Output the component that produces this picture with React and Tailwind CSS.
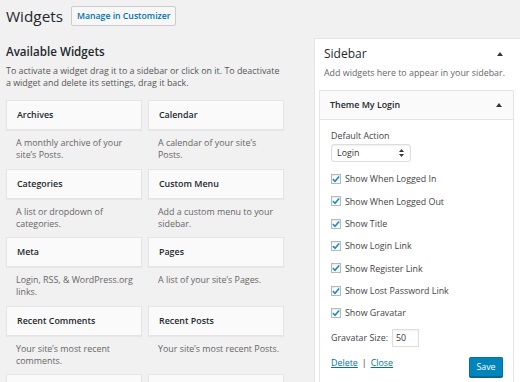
import React from 'react';

const widgets = [
  ['Archives', 'A monthly archive of your site’s Posts.'],
  ['Calendar', 'A calendar of your site’s Posts.'],
  ['Categories', 'A list or dropdown of categories.'],
  ['Custom Menu', 'Add a custom menu to your sidebar.'],
  ['Meta', 'Login, RSS, & WordPress.org links.'],
  ['Pages', 'A list of your site’s Pages.'],
  ['Recent Comments', 'Your site’s most recent comments.'],
  ['Recent Posts', 'Your site’s most recent Posts.'],
  ['', ''],
  ['', ''],
];

const options = [
  'Show When Logged In',
  'Show When Logged Out',
  'Show Title',
  'Show Login Link',
  'Show Register Link',
  'Show Lost Password Link',
  'Show Gravatar',
];

function UpArrow() {
  return (
    <svg width="6" height="4" viewBox="0 0 6 4">
      <polygon points="0,4 3,0 6,4" fill="#32373c" />
    </svg>
  );
}

function Checkbox() {
  return (
    <span className="flex items-center justify-center w-[10px] h-[10px] border border-[#b4b9be] bg-white shadow-[inset_0_1px_2px_rgba(0,0,0,0.1)]">
      <svg width="9" height="8" viewBox="0 0 9 8">
        <path d="M1 4.2 L3.4 6.6 L8 1.2" fill="none" stroke="#1e8cbe" strokeWidth="1.8" />
      </svg>
    </span>
  );
}

export default function App() {
  return (
    <div className="w-[520px] h-[382px] overflow-hidden bg-[#f1f1f1] font-['Open_Sans',sans-serif] text-[8.9px] text-[#444]">
      {/* Header */}
      <div className="flex items-center gap-[8px] pl-[6px] pt-[6px] h-[26px]">
        <h1 className="text-[15.3px] leading-[20px] text-[#23282d] font-normal">Widgets</h1>
        <button className="h-[20px] px-[5px] border border-[#ccc] bg-[#f7f7f7] rounded-[2px] text-[#0073aa] font-semibold text-[8.7px] leading-none">
          Manage in Customizer
        </button>
      </div>

      <div className="flex">
        {/* Available widgets */}
        <div className="w-[290px] shrink-0 pl-[6px]">
          <h2 className="mt-[17.5px] text-[11.6px] leading-[16px] font-semibold text-[#23282d]">
            Available Widgets
          </h2>
          <p className="mt-[5.5px] leading-[12px] text-[#555] pr-[6px]">
            To activate a widget drag it to a sidebar or click on it. To deactivate a widget and delete its settings, drag it back.
          </p>
          <div className="mt-[11px] grid grid-cols-[136px_136px] gap-x-[6px]">
            {widgets.map(([title, desc], i) => (
              <div key={i} className="h-[68.5px]">
                <div className="h-[30px] flex items-center px-[10px] bg-[#fafafa] border border-[#e5e5e5] shadow-[0_1px_1px_rgba(0,0,0,0.04)] font-semibold text-[#23282d]">
                  {title}
                </div>
                <p className="pt-[7px] pl-[10px] pr-[4px] leading-[12px] text-[#666]">{desc}</p>
              </div>
            ))}
          </div>
        </div>

        {/* Sidebar */}
        <div className="ml-[24px] mt-[12px] w-[215px] shrink-0 bg-white border border-[#e5e5e5] pb-[20px]">
          <div className="flex items-center justify-between pl-[9px] pr-[25px] pt-[7px]">
            <h2 className="text-[12px] leading-[16px] font-normal text-[#23282d]">Sidebar</h2>
            <UpArrow />
          </div>
          <p className="pl-[9px] mt-[5.3px] leading-[12px] text-[#666]">
            Add widgets here to appear in your sidebar.
          </p>
          <div className="ml-[4px] mt-[10.7px] w-[195px]">
            <div className="h-[30px] flex items-center justify-between pl-[10px] pr-[11px] bg-[#fafafa] border border-[#e5e5e5] font-semibold text-[#23282d]">
              <span>Theme My Login</span>
              <UpArrow />
            </div>
            <div className="bg-white border-x border-b border-[#e5e5e5] pl-[11px] pr-[10px] pt-[10px] pb-[10px]">
              <div className="leading-[12px] text-[#444]">Default Action</div>
              <div className="mt-[2px] w-[80px] h-[18px] flex items-center justify-between pl-[5px] pr-[6px] border border-[#ddd] rounded-[3px] bg-white shadow-[inset_0_1px_2px_rgba(0,0,0,0.07)] text-[#32373c]">
                <span>Login</span>
                <svg width="5" height="8" viewBox="0 0 5 8">
                  <polygon points="0,3 2.5,0 5,3" fill="#32373c" />
                  <polygon points="0,5 2.5,8 5,5" fill="#32373c" />
                </svg>
              </div>
              <div className="mt-[6px]">
                {options.map((o) => (
                  <div key={o} className="h-[22.3px] flex items-center gap-[4px] text-[#444]">
                    <Checkbox />
                    <span>{o}</span>
                  </div>
                ))}
              </div>
              <div className="mt-[5px] flex items-center gap-[4px]">
                <span>Gravatar Size:</span>
                <div className="w-[27px] h-[18px] flex items-center pl-[3px] border border-[#ddd] bg-white shadow-[inset_0_1px_2px_rgba(0,0,0,0.07)] text-[#32373c]">
                  50
                </div>
              </div>
              <div className="mt-[10px] flex items-start justify-between">
                <div className="leading-[12px] flex gap-[4px]">
                  <a className="text-[#0073aa] underline">Delete</a>
                  <span className="text-[#444]">|</span>
                  <a className="text-[#0073aa] underline">Close</a>
                </div>
                <button className="h-[20px] w-[34px] bg-[#0085ba] border border-[#0073aa] border-b-[#006799] rounded-[2px] text-white text-[8.9px] leading-none shadow-[0_1px_0_#006799]">
                  Save
                </button>
              </div>
            </div>
          </div>
        </div>
      </div>
    </div>
  );
}
